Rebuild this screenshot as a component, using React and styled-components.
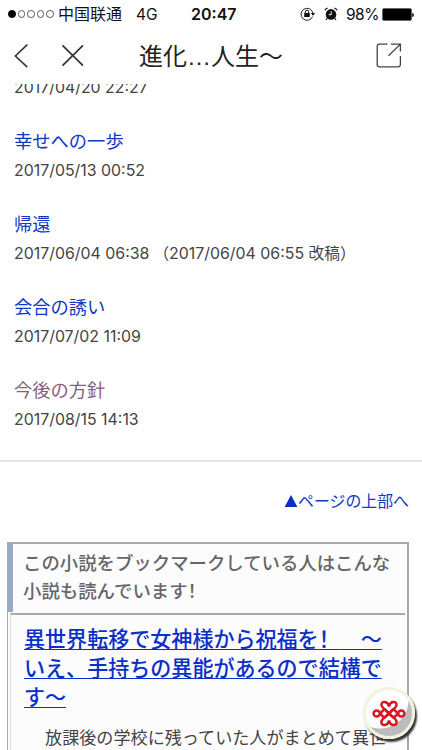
import React from 'react';
import styled, { createGlobalStyle } from 'styled-components';

const chapters = [
  { date: '2017/04/20 22:27' },
  { title: '幸せへの一歩', date: '2017/05/13 00:52' },
  { title: '帰還', date: '2017/06/04 06:38', revised: '2017/06/04 06:55' },
  { title: '会合の誘い', date: '2017/07/02 11:09' },
  { title: '今後の方針', date: '2017/08/15 14:13', visited: true },
];

function StatusBar() {
  return (
    <Status>
      <Signal>
        <Dot $filled />
        <Dot />
        <Dot />
        <Dot />
        <Dot />
      </Signal>
      <Carrier>中国联通</Carrier>
      <Network>4G</Network>
      <Clock>20:47</Clock>
      <StatusRight>
        <svg width="16" height="14" viewBox="0 0 16 14" fill="none" stroke="#111">
          <path d="M12.6 9.6A6 6 0 1 1 12.9 6" strokeWidth="0.9" />
          <path d="M10.8 6.1h4.4L13 8.8z" fill="#111" stroke="none" />
          <path d="M5.3 6.3V4.9a1.7 1.7 0 0 1 3.4 0v1.4" strokeWidth="1" />
          <rect x="4.2" y="6.1" width="5.6" height="4" rx="0.5" fill="#111" stroke="none" />
        </svg>
        <svg width="14" height="14" viewBox="0 0 14 14" fill="none" stroke="#111">
          <circle cx="7" cy="7.4" r="5.3" fill="#111" stroke="none" />
          <path d="M1 3.4Q1.6 1.6 3.7 1M13 3.4Q12.4 1.6 10.3 1" strokeWidth="1.3" />
          <path d="M3.2 11.3L2 12.8M10.8 11.3L12 12.8" strokeWidth="1.2" />
          <path d="M7.2 4.3V7.7H4.7" stroke="#fff" strokeWidth="1" />
        </svg>
        <Percent>98%</Percent>
        <Battery />
      </StatusRight>
    </Status>
  );
}

function Header() {
  return (
    <Nav>
      <NavButton aria-label="戻る" $left={14}>
        <svg width="16" height="26" viewBox="0 0 16 26" fill="none" stroke="#333" strokeWidth="1.6">
          <path d="M13.3 1.6L1.4 13 13.3 24.2" />
        </svg>
      </NavButton>
      <NavButton aria-label="閉じる" $left={31}>
        <svg width="24" height="24" viewBox="0 0 24 24" fill="none" stroke="#333" strokeWidth="1.7">
          <path d="M1.5 1.4L22 21.6M22 1.4L1.5 21.6" />
        </svg>
      </NavButton>
      <PageTitle>
        進化<Ellipsis>…</Ellipsis>人生～
      </PageTitle>
      <NavButton aria-label="共有" $left={0}>
        <svg width="26" height="26" viewBox="0 0 26 26" fill="none" stroke="#444" strokeWidth="1.3">
          <path d="M11.5 1.2H3.6Q1.2 1.2 1.2 3.6V21.5Q1.2 23.8 3.6 23.8H22Q24.4 23.8 24.4 21.5V13" />
          <path d="M15 1.2H24.4V8.5M24.2 1.4L12.4 12.8" />
        </svg>
      </NavButton>
    </Nav>
  );
}

function UnicomKnot() {
  return (
    <svg width="34" height="27" viewBox="0 0 34 27" fill="none" stroke="#dc1420" strokeWidth="2.5" strokeLinejoin="round">
      <path d="M17 6.6C16 1.2 9.4 0.6 9.4 4.8C9.4 7 11 8 12.6 9.2L22 17.8C23.4 19 24.6 20 24.6 22.2C24.6 26.4 18 25.8 17 20.4" />
      <path d="M17 6.6C18 1.2 24.6 0.6 24.6 4.8C24.6 7 23 8 21.4 9.2L12 17.8C10.6 19 9.4 20 9.4 22.2C9.4 26.4 16 25.8 17 20.4" />
      <path d="M8 13.5L12.4 9.2L17 13.5L12.4 17.8Z" />
      <path d="M26 13.5L21.6 9.2L17 13.5L21.6 17.8Z" />
      <circle cx="4.7" cy="13.5" r="3.1" />
      <circle cx="29.3" cy="13.5" r="3.1" />
    </svg>
  );
}

export default function App() {
  return (
    <Screen>
      <GlobalStyle />
      <StatusBar />
      <Header />
      <Content>
        <ChapterList>
          {chapters.map((c) => (
            <Chapter key={c.date}>
              {c.title && <ChapterLink $visited={c.visited}>{c.title}</ChapterLink>}
              <ChapterDate>
                <span>{c.date}</span>
                {c.revised && (
                  <Revised>
                    <Kanji>（</Kanji>
                    {c.revised} <Kanji>改稿）</Kanji>
                  </Revised>
                )}
              </ChapterDate>
            </Chapter>
          ))}
        </ChapterList>
        <TopLink>
          <svg width="14" height="12" viewBox="0 0 14 12">
            <path d="M7 0L13.4 12H0.6z" fill="#0a2fc8" />
          </svg>
          <span>ページの上部へ</span>
        </TopLink>
        <Recommend>
          <RecommendHeading>
            この小説をブックマークしている人はこんな
            <br />
            小説も読んでいます<Bang>！</Bang>
          </RecommendHeading>
          <Novel>
            <NovelTitle>
              異世界転移で女神様から祝福を<Bang>！</Bang>　～
              <br />
              いえ、手持ちの異能があるので結構で
              <br />
              す～
            </NovelTitle>
            <Summary>　放課後の学校に残っていた人がまとめて異世</Summary>
          </Novel>
        </Recommend>
      </Content>
      <FloatingBall>
        <UnicomKnot />
      </FloatingBall>
    </Screen>
  );
}

const GlobalStyle = createGlobalStyle`
  * {
    box-sizing: border-box;
  }

  body {
    margin: 0;
    background: #fff;
    font-family: 'Noto Sans CJK JP', sans-serif;
  }
`;

const Screen = styled.div`
  position: relative;
  display: flex;
  flex-direction: column;
  width: 422px;
  height: 750px;
  overflow: hidden;
  background: #fff;
  white-space: nowrap;
`;

const Status = styled.div`
  display: flex;
  align-items: center;
  height: 28px;
  flex-shrink: 0;
  padding: 0 7px 0 8px;
  color: #111;
  font-family: Inter, sans-serif;
  font-size: 15.5px;
`;

const Signal = styled.div`
  display: flex;
  gap: 2px;
  width: 50px;
`;

const Dot = styled.span`
  width: 7.6px;
  height: 7.6px;
  border: 1px solid ${({ $filled }) => ($filled ? '#000' : '#555')};
  border-radius: 50%;
  background: ${({ $filled }) => ($filled ? '#000' : 'transparent')};
`;

const Carrier = styled.span`
  width: 78px;
  margin-top: -2px;
  font-family: 'Noto Sans CJK SC', sans-serif;
  font-size: 16px;
  line-height: 28px;
`;

const Network = styled.span`
  width: 55px;
  font-size: 15.5px;
`;

const Clock = styled.span`
  font-size: 16px;
  font-weight: 600;
`;

const StatusRight = styled.div`
  display: flex;
  align-items: center;
  margin-left: auto;

  svg + svg {
    margin-left: 8px;
  }
`;

const Percent = styled.span`
  margin-left: 8px;
  width: 36px;
  font-size: 15.5px;
  letter-spacing: -0.5px;
`;

const Battery = styled.span`
  position: relative;
  width: 30px;
  height: 13px;
  margin-right: 3px;
  border: 1px solid #666;
  border-radius: 2px;
  background: #000;

  &::after {
    content: '';
    position: absolute;
    top: 4px;
    right: -3px;
    width: 2px;
    height: 4px;
    border-radius: 0 2px 2px 0;
    background: #333;
  }
`;

const Nav = styled.div`
  display: flex;
  align-items: center;
  height: 56px;
  flex-shrink: 0;
  padding-right: 20px;
`;

const NavButton = styled.button`
  display: flex;
  margin: 0 0 0 ${({ $left }) => $left}px;
  padding: 0;
  border: 0;
  background: none;
`;

const PageTitle = styled.h1`
  flex: 1;
  margin: -3px 0 0 54px;
  color: #222;
  font-size: 24px;
  font-weight: 400;
  line-height: 56px;
`;

const Ellipsis = styled.span`
  display: inline-block;
  width: 24px;
  font-family: 'Liberation Sans', sans-serif;
  font-size: 24px;
  line-height: 1;
`;

const Content = styled.main`
  flex: 1;
  min-height: 0;
  overflow: hidden;
`;

const ChapterList = styled.div`
  margin-top: -10px;
  padding: 0 13px 26px 14px;
  border-bottom: 2px solid #e6e6e6;
`;

const Chapter = styled.div`
  margin-bottom: 24px;

  &:last-child {
    margin-bottom: 0;
  }
`;

const ChapterLink = styled.a`
  display: block;
  height: 31px;
  color: ${({ $visited }) => ($visited ? '#8b5d7c' : '#1238c4')};
  font-size: 18.3px;
  line-height: 28px;
`;

const ChapterDate = styled.div`
  display: flex;
  height: 28px;
  color: #444;
  font-family: Inter, sans-serif;
  font-size: 15.9px;
  line-height: 28px;
`;

const Revised = styled.span`
  margin-left: 4px;
`;

const Kanji = styled.span`
  font-family: 'Noto Sans CJK JP', sans-serif;
  font-size: 15.7px;
  line-height: 1;
`;

const TopLink = styled.a`
  display: flex;
  align-items: center;
  justify-content: flex-end;
  height: 80px;
  padding: 0 13px 3px 0;
  color: #1238c4;
  font-size: 15.9px;

  svg {
    margin-top: 1px;
  }
`;

const Recommend = styled.section`
  margin: 0 13px 0 7px;
  border: 2px solid #aaa;
  border-bottom: 0;
  border-left-width: 1px;
  background: #fcfcfd;
`;

const RecommendHeading = styled.h2`
  height: 68px;
  margin: 0;
  padding: 5px 0 0 10px;
  border-left: 5px solid #9aa8c8;
  color: #666;
  font-size: 18.4px;
  font-weight: 500;
  line-height: 27.5px;
`;

const Bang = styled.span`
  font-family: 'Noto Sans CJK SC', sans-serif;
  line-height: 1;
`;

const Novel = styled.div`
  margin: 1px 2px 0 2px;
  padding: 9px 0 0 13px;
  border-top: 2px solid #aaa;
  border-left: 1px solid #ddd;
`;

const NovelTitle = styled.a`
  display: block;
  color: #0a2fc8;
  font-size: 21.06px;
  font-weight: 500;
  line-height: 29px;
  text-decoration: underline;
  text-decoration-thickness: 1px;
  text-decoration-skip-ink: none;
  text-underline-offset: 2px;
`;

const Summary = styled.p`
  margin: 12px 0 0 4px;
  color: #444;
  font-size: 17.1px;
  line-height: 28px;
`;

const FloatingBall = styled.div`
  position: absolute;
  left: 363px;
  top: 687px;
  display: flex;
  align-items: center;
  justify-content: center;
  width: 52px;
  height: 52px;
  border: 3px solid #f3f2dc;
  border-radius: 50%;
  background: radial-gradient(circle at 14px 10px, #fff 28px, #bcbcc0 29px);
  box-shadow: 2px 3px 2px #333;
`;
